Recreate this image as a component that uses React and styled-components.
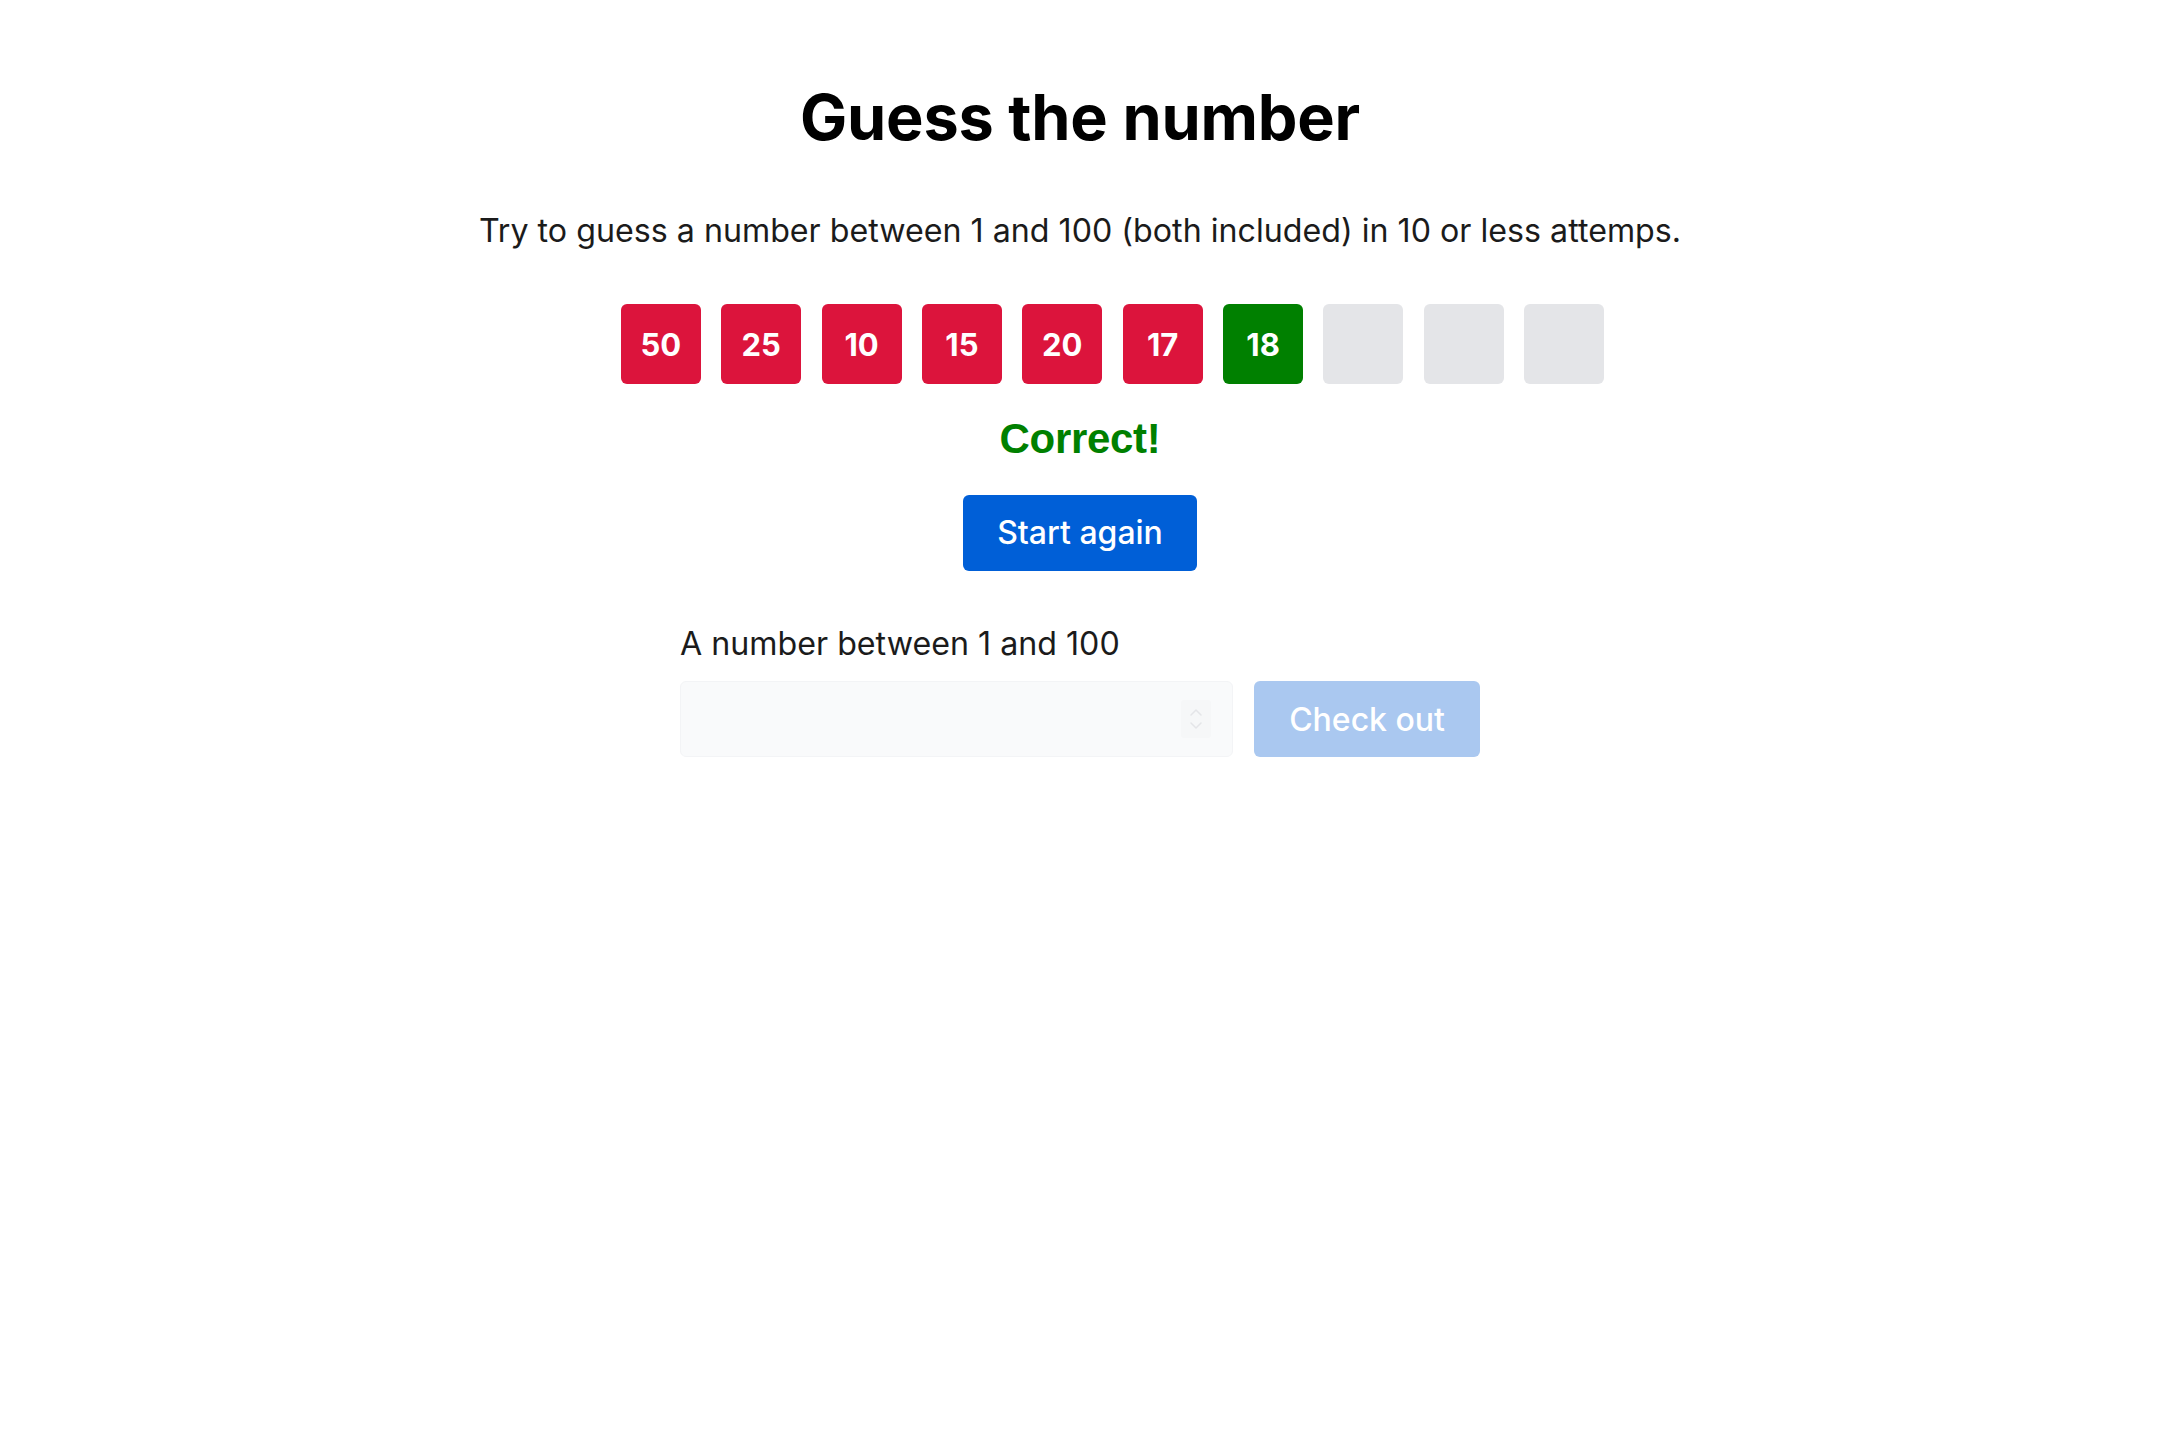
import React from 'react';
import styled, { createGlobalStyle } from 'styled-components';

const GlobalStyle = createGlobalStyle`
    body {
        margin: 0;
        background: #ffffff;
        font-family: Inter, 'Noto Sans', sans-serif;
        color: #1b1b1b;
    }
`;

const Page = styled.main`
    display: flex;
    flex-direction: column;
    align-items: center;
    padding-top: 80px;
    text-align: center;
`;

const Title = styled.h1`
    margin: 0;
    font-size: 63px;
    line-height: 1.2;
    font-weight: 700;
    color: #000000;
    letter-spacing: -0.2px;
`;

const Intro = styled.p`
    margin: 51.4px 0 0;
    font-size: 32.2px;
    line-height: 1.5;
    color: #1b1b1b;
`;

const Attempts = styled.ul`
    display: flex;
    gap: 20.4px;
    list-style: none;
    margin: 49px 0 0;
    padding: 0 0 0 65px;
`;

const tileColors = {
    wrong: '#dc143c',
    right: '#008000',
    empty: '#e4e5e8',
};

const Tile = styled.li`
    width: 80px;
    height: 80px;
    border-radius: 6px;
    display: flex;
    align-items: center;
    justify-content: center;
    background: ${(props) => tileColors[props.$status]};
    color: #ffffff;
    font-size: 31px;
    font-weight: 700;
`;

const Result = styled.p`
    margin: 31px 0 0;
    font-family: 'Liberation Sans', Arial, sans-serif;
    font-size: 42px;
    line-height: 1.15;
    font-weight: 700;
    color: #008000;
    letter-spacing: -0.3px;
`;

const Button = styled.button`
    border: none;
    border-radius: 6px;
    height: 76px;
    padding: 0 ${(props) => (props.$wide ? 35 : 34)}px;
    font-family: Inter, sans-serif;
    font-size: 32px;
    font-weight: 500;
    color: #ffffff;
    background: ${(props) => (props.disabled ? '#aac8f0' : '#005fd7')};
    cursor: ${(props) => (props.disabled ? 'default' : 'pointer')};
`;

const RestartWrap = styled.div`
    margin-top: 31px;
`;

const Form = styled.form`
    margin-top: 49.3px;
    width: 800px;
    text-align: left;
`;

const Label = styled.label`
    display: block;
    font-size: 32.2px;
    line-height: 1.5;
    color: #1b1b1b;
`;

const Row = styled.div`
    display: flex;
    gap: 21px;
    margin-top: 13.2px;
`;

const InputWrap = styled.div`
    position: relative;
    flex: 1;
`;

const NumberInput = styled.input`
    box-sizing: border-box;
    width: 100%;
    height: 76px;
    border: 1px solid #f3f4f6;
    border-radius: 6px;
    background: #f9fafb;
    font-family: Inter, sans-serif;
    font-size: 30px;
    padding: 0 20px;
    outline: none;
    appearance: textfield;
    &::-webkit-inner-spin-button,
    &::-webkit-outer-spin-button {
        -webkit-appearance: none;
        margin: 0;
    }
`;

const Spinner = styled.span`
    position: absolute;
    right: 22px;
    top: 50%;
    transform: translateY(-50%);
    width: 30px;
    height: 38px;
    border-radius: 3px;
    background: #f6f7f8;
    display: flex;
    align-items: center;
    justify-content: center;
    pointer-events: none;
`;

const guesses = [50, 25, 10, 15, 20, 17, 18];
const target = 18;

const App = () => {
    const tiles = Array.from({ length: 10 }, (_, i) => guesses[i]);
    return (
        <>
            <GlobalStyle />
            <Page>
                <Title>Guess the number</Title>
                <Intro>Try to guess a number between 1 and 100 (both included) in 10 or less attemps.</Intro>
                <Attempts>
                    {tiles.map((n, i) => (
                        <Tile key={i} $status={n === undefined ? 'empty' : n === target ? 'right' : 'wrong'}>
                            {n}
                        </Tile>
                    ))}
                </Attempts>
                <Result>Correct!</Result>
                <RestartWrap>
                    <Button type="button">Start again</Button>
                </RestartWrap>
                <Form onSubmit={(e) => e.preventDefault()}>
                    <Label htmlFor="guess">A number between 1 and 100</Label>
                    <Row>
                        <InputWrap>
                            <NumberInput id="guess" type="number" min="1" max="100" disabled />
                            <Spinner>
                                <svg width="14" height="26" viewBox="0 0 14 26" fill="none" stroke="#e4e5e8" strokeWidth="1.5" strokeLinecap="round" strokeLinejoin="round">
                                    <path d="M2 9 L7 4 L12 9" />
                                    <path d="M2 17 L7 22 L12 17" />
                                </svg>
                            </Spinner>
                        </InputWrap>
                        <Button type="submit" disabled $wide>
                            Check out
                        </Button>
                    </Row>
                </Form>
            </Page>
        </>
    );
};

export default App;
